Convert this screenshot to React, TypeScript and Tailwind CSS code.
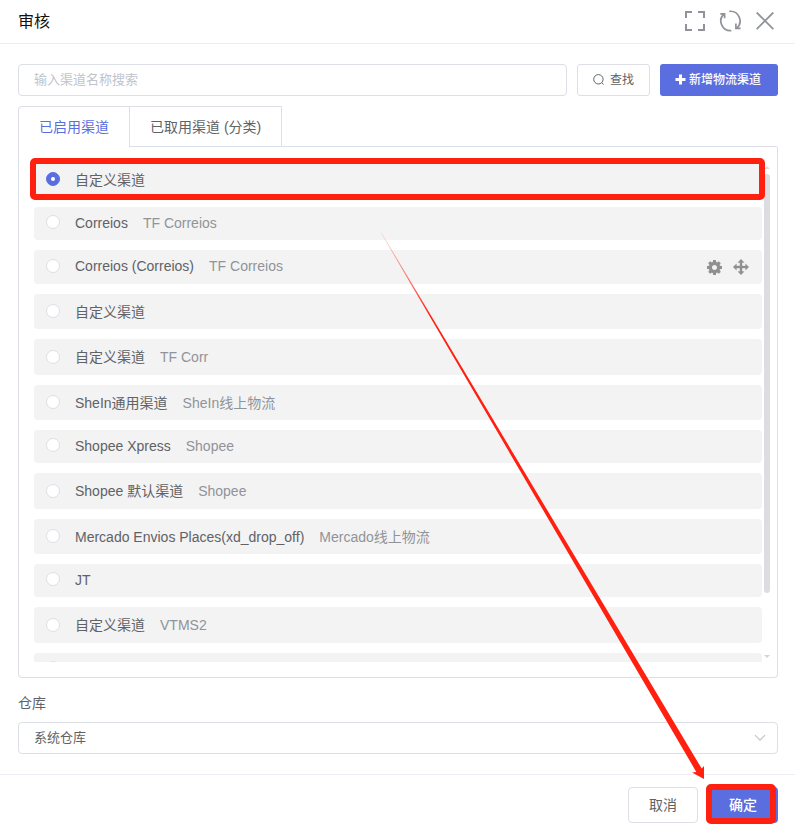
import React from "react";

type Channel = {
  name: string;
  carrier?: string;
  box: string;
  radio: string;
  line: string;
  checked?: boolean;
  tools?: boolean;
};

const channels: Channel[] = [
  { name: "自定义渠道", box: "h-[35px]", radio: "mt-[10px]", line: "mt-[8px]", checked: true },
  { name: "Correios", carrier: "TF Correios", box: "h-[33px]", radio: "mt-[8px]", line: "mt-[6px]" },
  { name: "Correios (Correios)", carrier: "TF Correios", box: "h-[34px]", radio: "mt-[9px]", line: "mt-[6px]", tools: true },
  { name: "自定义渠道", box: "h-[35px]", radio: "mt-[10px]", line: "mt-[8px]" },
  { name: "自定义渠道", carrier: "TF Corr", box: "h-[36px]", radio: "mt-[11px]", line: "mt-[8px]" },
  { name: "SheIn通用渠道", carrier: "SheIn线上物流", box: "h-[35px]", radio: "mt-[10px]", line: "mt-[8px]" },
  { name: "Shopee Xpress", carrier: "Shopee", box: "h-[33px]", radio: "mt-[8px]", line: "mt-[6px]" },
  { name: "Shopee 默认渠道", carrier: "Shopee", box: "h-[36px]", radio: "mt-[11px]", line: "mt-[8px]" },
  { name: "Mercado Envios Places(xd_drop_off)", carrier: "Mercado线上物流", box: "h-[35px]", radio: "mt-[10px]", line: "mt-[8px]" },
  { name: "JT", box: "h-[33px]", radio: "mt-[8px]", line: "mt-[6px]" },
  { name: "自定义渠道", carrier: "VTMS2", box: "h-[36px]", radio: "mt-[11px]", line: "mt-[8px]" },
  { name: "", box: "h-[33px]", radio: "mt-[8px]", line: "mt-[6px]" },
];

function GearIcon() {
  return (
    <svg width="15" height="15" viewBox="0 0 1536 1536" fill="#909090">
      <path d="M1024 768q0-106-75-181t-181-75-181 75-75 181 75 181 181 75 181-75 75-181zm512-109v222q0 12-8 23t-20 13l-185 28q-19 54-39 91 35 50 107 138 10 12 10 25t-9 23q-27 37-99 108t-94 71q-12 0-26-9l-138-108q-44 23-91 38-16 136-29 186-7 28-36 28h-222q-14 0-24.500-8.500t-11.500-21.500l-28-184q-49-16-90-37l-141 107q-10 9-25 9-14 0-25-11-126-114-165-168-7-10-7-23 0-12 8-23 15-21 51-66.500t54-70.500q-27-50-41-99l-183-27q-13-2-21-12.500t-8-23.500v-222q0-12 8-23t19-13l186-28q14-46 39-92-40-57-107-138-10-12-10-24 0-10 9-23 26-36 98.500-107.500t94.500-71.500q13 0 26 10l138 107q44-23 91-38 16-136 29-186 7-28 36-28h222q14 0 24.500 8.500t11.500 21.500l28 184q49 16 90 37l142-107q9-9 24-9 13 0 25 10 129 119 165 170 7 8 7 22 0 12-8 23-15 21-51 66.500t-54 70.500q26 50 41 98l183 28q13 2 21 12.500t8 23.500z" />
    </svg>
  );
}

function MoveIcon() {
  return (
    <svg width="16" height="16" viewBox="0 0 16 16" fill="#909090" stroke="#909090" strokeWidth="0.400" strokeLinejoin="round">
      <path d="M8 .2l3 3.200H9v3.600h3.600V5L15.800 8l-3.200 3V9H9v3.600h2L8 15.800l-3-3.200h2V9H3.400v2L.2 8l3.200-3v2H7V3.400H5z" />
    </svg>
  );
}

function ChannelRow({ c }: { c: Channel }) {
  return (
    <div className={`flex w-[728px] shrink-0 items-start rounded-[4px] bg-[#f3f3f3] pl-3 pr-[13px] ${c.box}`}>
      <span
        className={`flex size-[14px] shrink-0 items-center justify-center rounded-full border ${c.radio} ${
          c.checked ? "border-[#5a6ee0] bg-[#5a6ee0]" : "border-[#dcdfe6] bg-white"
        }`}
      >
        {c.checked && <span className="size-1 rounded-full bg-white" />}
      </span>
      <span className={`ml-[15px] whitespace-nowrap text-sm leading-5 text-[#606266] ${c.line}`}>{c.name}</span>
      {c.carrier && <span className={`ml-[15px] whitespace-nowrap text-sm leading-5 text-[#909399] ${c.line}`}>{c.carrier}</span>}
      {c.tools && (
        <span className="ml-auto mt-[9px] flex items-center gap-[11px]">
          <GearIcon />
          <MoveIcon />
        </span>
      )}
    </div>
  );
}

export default function App() {
  return (
    <div
      className="relative flex h-[832px] w-[795px] flex-col overflow-hidden bg-white text-[#606266]"
      style={{ fontFamily: '"Liberation Sans", "Noto Sans CJK SC", sans-serif' }}
    >
      <header className="flex h-[44px] shrink-0 items-start border-b border-[#ebeef5] pl-[18px] pr-[21px]">
        <h1 className="mt-[10px] text-base leading-6 text-[#111]">审核</h1>
        <div className="ml-auto mt-[9px] flex items-start text-[#909399]">
          <svg className="mr-[13px] mt-px" width="22" height="22" viewBox="0 0 22 22" fill="none" stroke="currentColor" strokeWidth="2">
            <path d="M2 8V2h6M14 2h6v6M20 14v6h-6M8 20H2v-6" />
          </svg>
          <svg className="mr-[13px]" width="24" height="24" viewBox="0 0 24 24" fill="none" stroke="currentColor" strokeWidth="1.700">
            <path d="M10.300 2.300A9.700 9.700 0 0 1 17.600 19.300M12.300 21.600A9.700 9.700 0 0 1 5 4.800M1.300 4.800h4.300v4.500M21.600 19.400h-4.700v-4.800" />
          </svg>
          <svg className="mt-[3px]" width="18" height="18" viewBox="0 0 18 18" fill="none" stroke="currentColor" strokeWidth="1.800">
            <path d="M.7.500l16.600 16.600M17.300.500L.7 17.100" />
          </svg>
        </div>
      </header>

      <main className="flex h-[730px] shrink-0 flex-col px-[18px] pt-5">
        <div className="flex h-8 w-[760px] shrink-0">
          <div className="h-8 w-[549px] rounded-[4px] border border-[#dcdfe6] pl-[15px] text-[13px] leading-[29px] text-[#c0c4cc]">
            输入渠道名称搜索
          </div>
          <button className="ml-[10px] flex h-8 w-[73px] items-center rounded-[3px] border border-[#dcdfe6] pl-[15px] text-xs">
            <svg width="12" height="12" viewBox="0 0 12 12" fill="none" stroke="#606266" strokeWidth="1">
              <circle cx="5.400" cy="5.300" r="4.700" />
              <path d="M8.800 8.700l1.700 1.800" />
            </svg>
            <span className="ml-[5px] leading-[18px]">查找</span>
          </button>
          <button className="ml-[10px] flex h-8 w-[118px] items-center rounded-[3px] bg-[#5a6ee0] pl-[15px] text-xs font-medium text-white">
            <svg className="-mt-px" width="11" height="11" viewBox="0 0 11 11" fill="#fff">
              <path d="M4 .5h3V4h3.500v3H7v3.500H4V7H.5V4H4z" />
            </svg>
            <span className="ml-[3px] whitespace-nowrap leading-[18px]">新增物流渠道</span>
          </button>
        </div>

        <div className="mt-[10px] flex h-[41px] shrink-0 text-sm">
          <div className="w-[112px] rounded-tl-[4px] border border-b-0 border-[#dcdfe6] pl-5 leading-[40px] text-[#5a6ee0]">已启用渠道</div>
          <div className="w-[152px] border border-l-0 border-[#dcdfe6] pl-5 leading-[40px]">已取用渠道 (分类)</div>
          <div className="flex-1 border-b border-[#dcdfe6]" />
        </div>
        <section className="flex h-[531px] w-[760px] shrink-0 rounded-b-[4px] border border-t-0 border-[#dcdfe6] pl-[15px] pt-[15px]">
          <div className="flex h-[500px] flex-col gap-[10px] overflow-hidden">
            {channels.map((c, i) => (
              <ChannelRow key={i} c={c} />
            ))}
          </div>
          <div className="ml-[2px] flex h-[500px] w-[6px] flex-col items-center">
            <div className="mt-[4px] h-0 w-0 border-x-[3px] border-b-[3px] border-x-transparent border-b-[#dcdde0]" />
            <div className="mt-[5px] h-[419px] w-[6px] rounded-[3px] bg-[#dcdde0]" />
            <div className="mt-[62px] h-0 w-0 border-x-[3px] border-t-[3px] border-x-transparent border-t-[#d3d4d6]" />
          </div>
        </section>

        <label className="mt-[15px] h-5 shrink-0 text-sm leading-5">仓库</label>
        <div className="mt-[9px] flex h-8 w-[760px] shrink-0 items-center justify-between rounded-[4px] border border-[#dcdfe6] pl-[15px] pr-[11px] text-[13px]">
          <span className="-mt-px leading-5">系统仓库</span>
          <svg width="12" height="8" viewBox="0 0 12 8" fill="none" stroke="#c0c4cc" strokeWidth="1.200">
            <path d="M1 1.200l5 5 5-5" />
          </svg>
        </div>
      </main>

      <footer className="flex flex-1 items-start justify-end border-t border-[#ebeef5] pr-[17px] pt-3 text-sm">
        <button className="h-9 w-[70px] rounded-[4px] border border-[#dcdfe6] leading-[34px]">取消</button>
        <button className="ml-[10px] h-9 w-[70px] rounded-[4px] bg-[#5a6ee0] font-medium leading-9 text-white">确定</button>
      </footer>

      <div className="absolute left-[30px] top-[158px] h-[42px] w-[735px] rounded-[5px] border-6 border-[#ff2010]" />
      <div className="absolute left-[706px] top-[784px] h-[40px] w-[70px] rounded-[5px] border-6 border-[#ff2010]" />
      <svg className="absolute left-0 top-0" width="795" height="832" viewBox="0 0 795 832">
        <defs>
          <linearGradient id="arrowFade" gradientUnits="userSpaceOnUse" x1="381" y1="234" x2="430" y2="317">
            <stop offset="0" stopColor="#ff2010" stopOpacity="0.150" />
            <stop offset="1" stopColor="#ff2010" />
          </linearGradient>
        </defs>
        <path d="M380.800 232.800L381.400 232.500L701.700 768.600L704 766L704 779L692 772.500L696.300 771.900Z" fill="url(#arrowFade)" />
      </svg>
    </div>
  );
}
